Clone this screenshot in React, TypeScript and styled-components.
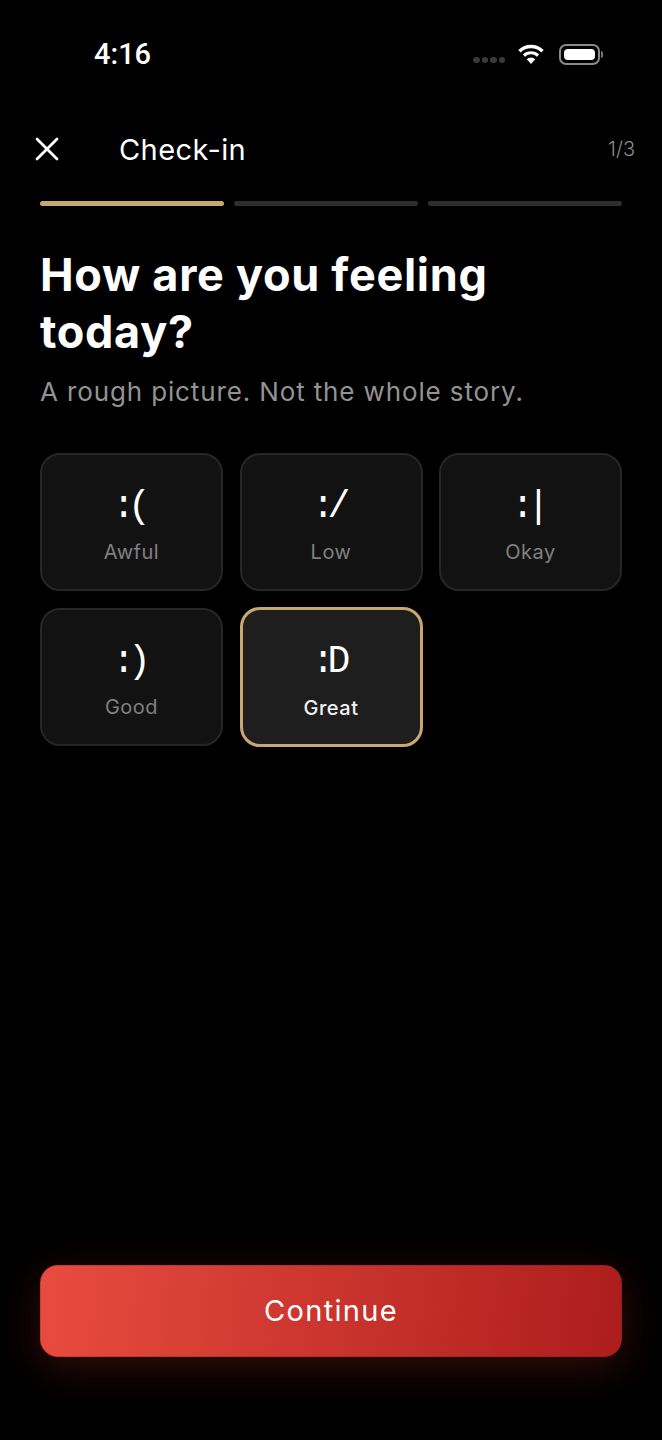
import React, { useState } from "react";
import styled, { createGlobalStyle } from "styled-components";

const moods = [
  { face: ":(", label: "Awful" },
  { face: ":/", label: "Low" },
  { face: ":|", label: "Okay" },
  { face: ":)", label: "Good" },
  { face: ":D", label: "Great" },
];

export default function App() {
  const [selected, setSelected] = useState("Great");
  return (
    <Page>
      <GlobalStyle />
      <StatusBar>
        <Time>4:16</Time>
        <StatusIcons>
          <SignalDots>
            <i />
            <i />
            <i />
            <i />
          </SignalDots>
          <svg width="26" height="21" viewBox="0 0 26 21" aria-hidden="true">
            <path d="M1.5 7.2 A16.5 16.5 0 0 1 24.5 7.2" fill="none" stroke="#fff" strokeWidth="3.4" />
            <path d="M6 11.6 A10 10 0 0 1 20 11.6" fill="none" stroke="#fff" strokeWidth="3.2" />
            <path d="M8.8 15.2 A6 6 0 0 1 17.2 15.2 L13 20 Z" fill="#fff" />
          </svg>
          <Battery>
            <BatteryFill />
          </Battery>
        </StatusIcons>
      </StatusBar>

      <Header>
        <CloseButton aria-label="Close">
          <svg width="26" height="26" viewBox="0 0 26 26" aria-hidden="true">
            <path d="M3 3 L23 23 M23 3 L3 23" fill="none" stroke="#fff" strokeWidth="2.8" strokeLinecap="round" />
          </svg>
        </CloseButton>
        <Title>Check-in</Title>
        <StepCount>1/3</StepCount>
      </Header>

      <Progress>
        <Segment $active />
        <Segment />
        <Segment />
      </Progress>

      <Heading>How are you feeling today?</Heading>
      <Subheading>A rough picture. Not the whole story.</Subheading>

      <MoodGrid>
        {moods.map(mood => (
          <MoodCard
            key={mood.label}
            $selected={selected === mood.label}
            onClick={() => setSelected(mood.label)}
          >
            <Face>{mood.face}</Face>
            <MoodLabel $selected={selected === mood.label}>{mood.label}</MoodLabel>
          </MoodCard>
        ))}
      </MoodGrid>

      <ContinueButton>Continue</ContinueButton>
    </Page>
  );
}

const GlobalStyle = createGlobalStyle`
  html, body {
    margin: 0;
    background: #000;
  }
  * {
    box-sizing: border-box;
  }
`;

const Page = styled.div`
  display: flex;
  flex-direction: column;
  width: 662px;
  height: 1440px;
  overflow: hidden;
  background: #000;
  color: #fff;
  font-family: Inter, "Noto Sans", sans-serif;
`;

const StatusBar = styled.div`
  display: flex;
  justify-content: space-between;
  align-items: center;
  height: 108px;
  padding: 0 62px 0 94px;
`;

const Time = styled.span`
  font-size: 29px;
  font-weight: 500;
  font-family: Roboto, Inter, sans-serif;
`;

const StatusIcons = styled.div`
  display: flex;
  align-items: center;
`;

const SignalDots = styled.div`
  display: flex;
  gap: 2px;
  margin: 12px 13px 0 0;
  i {
    width: 6.5px;
    height: 6px;
    border-radius: 50%;
    background: #3a3a3a;
  }
`;

const Battery = styled.div`
  position: relative;
  width: 41px;
  height: 21px;
  margin-left: 15px;
  padding: 3px;
  border: 2px solid #8a8a8a;
  border-radius: 7px;
  &::after {
    content: "";
    position: absolute;
    right: -5px;
    top: 5px;
    width: 2px;
    height: 7px;
    border-radius: 0 2px 2px 0;
    background: #777;
  }
`;

const BatteryFill = styled.div`
  width: 100%;
  height: 100%;
  border-radius: 4px;
  background: #fff;
`;

const Header = styled.div`
  display: flex;
  align-items: center;
  height: 44px;
  margin-top: 19px;
  padding: 0 27px 0 34px;
`;

const CloseButton = styled.button`
  display: flex;
  width: 26px;
  height: 26px;
  padding: 0;
  border: 0;
  background: none;
`;

const Title = styled.h1`
  margin: 0 0 0 59px;
  font-size: 29px;
  font-weight: 400;
  letter-spacing: 0.4px;
`;

const StepCount = styled.span`
  margin-left: auto;
  font-size: 20px;
  font-weight: 300;
  color: #8c8c8c;
`;

const Progress = styled.div`
  display: grid;
  grid-template-columns: 184px 184px 194px;
  gap: 10px;
  margin: 30px 0 0 40px;
`;

const Segment = styled.div<{ $active?: boolean }>`
  height: 5px;
  border-radius: 3px;
  background: ${p => (p.$active ? "#c9a86f" : "#2e2e2e")};
`;

const Heading = styled.h2`
  width: 500px;
  margin: 40px 0 0 40px;
  font-size: 45px;
  font-weight: 700;
  line-height: 57px;
  letter-spacing: 0.7px;
`;

const Subheading = styled.p`
  margin: 14px 0 0 40px;
  font-size: 26px;
  font-weight: 400;
  line-height: 36px;
  letter-spacing: 0.87px;
  color: #939393;
`;

const MoodGrid = styled.div`
  display: grid;
  grid-template-columns: repeat(3, 183px);
  grid-auto-rows: 138px;
  gap: 17px 16.5px;
  margin: 43px 0 0 40px;
`;

const MoodCard = styled.button<{ $selected?: boolean }>`
  display: flex;
  flex-direction: column;
  align-items: center;
  padding: 30px 0 0;
  margin: ${p => (p.$selected ? "-1px 0" : "0")};
  border: ${p => (p.$selected ? "3px solid #c9a86f" : "2px solid #262626")};
  border-radius: 20px;
  background: ${p => (p.$selected ? "#1e1e1e" : "#121212")};
  color: #fff;
  font-family: inherit;
`;

const Face = styled.span`
  margin-right: 7px;
  font-family: "Liberation Mono", "DejaVu Sans Mono", monospace;
  font-size: 38px;
  line-height: 44px;
  letter-spacing: -7px;
`;

const MoodLabel = styled.span<{ $selected?: boolean }>`
  margin-top: ${p => (p.$selected ? "11px" : "10px")};
  font-size: 20px;
  font-weight: ${p => (p.$selected ? 500 : 400)};
  line-height: 26px;
  letter-spacing: 0.5px;
  color: ${p => (p.$selected ? "#f2f2f2" : "#808080")};
`;

const ContinueButton = styled.button`
  align-self: center;
  width: 582px;
  height: 92px;
  margin: auto 0 83px;
  padding: 0 0 2px;
  border: 1px solid rgba(120, 20, 20, 0.25);
  border-radius: 18px;
  background: linear-gradient(96deg, #e84c3e 0%, #ad1d1d 100%) border-box;
  box-shadow: 0 10px 40px rgba(200, 50, 40, 0.26);
  color: #fff;
  font-family: inherit;
  font-size: 29px;
  font-weight: 400;
  letter-spacing: 1.3px;
`;
